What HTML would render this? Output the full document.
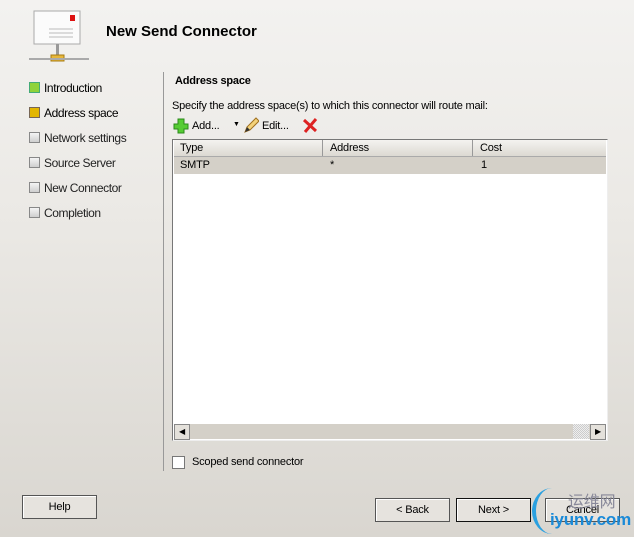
<!DOCTYPE html><html><head><style>
body{margin:0;width:634px;height:537px;overflow:hidden;font-family:"Liberation Sans",sans-serif;font-size:11px;letter-spacing:-0.2px;color:#000;background:linear-gradient(#f3f2f0,#ebe9e5 40%,#d9d6d0);position:relative}
.a{position:absolute;white-space:nowrap}
.nav{left:44px}
.sq{position:absolute;left:29px;width:9px;height:9px;border:1px solid #888;background:linear-gradient(#f4f4f4,#cfcfcf)}
.btn{position:absolute;height:22px;border:1px solid #555;box-shadow:inset 1px 1px #fff;background:#e6e3de;text-align:center;line-height:22px}
</style></head><body>
<svg class="a" style="left:27px;top:8px" width="64" height="56"><rect x="7" y="3" width="46" height="33" fill="#fbfbfb" stroke="#aaa"/><rect x="43" y="7" width="5" height="6" fill="#d11"/><g stroke="#bbb"><line x1="22" y1="21" x2="46" y2="21"/><line x1="22" y1="25" x2="46" y2="25"/><line x1="22" y1="29" x2="46" y2="29"/></g><rect x="29" y="36" width="3" height="12" fill="#999"/><rect x="24" y="47" width="13" height="6" fill="#e7b73a" stroke="#a77b10"/><line x1="2" y1="51" x2="62" y2="51" stroke="#aaa" stroke-width="2"/></svg>
<div class="a" style="left:106px;top:23px;font-weight:bold;font-size:15px;letter-spacing:0">New Send Connector</div>
<div class="sq" style="top:82px;background:#8fd33a;border-color:#4a7"></div>
<div class="sq" style="top:107px;background:#e3b600;border-color:#765"></div>
<div class="sq" style="top:132px"></div><div class="sq" style="top:157px"></div><div class="sq" style="top:182px"></div><div class="sq" style="top:207px"></div>
<div class="a nav" style="top:81px;font-size:12px;letter-spacing:-0.4px">Introduction</div>
<div class="a nav" style="top:106px;font-size:12px;letter-spacing:-0.4px">Address space</div>
<div class="a nav" style="top:131px;color:#222;font-size:12px;letter-spacing:-0.4px">Network settings</div>
<div class="a nav" style="top:156px;color:#222;font-size:12px;letter-spacing:-0.4px">Source Server</div>
<div class="a nav" style="top:181px;color:#222;font-size:12px;letter-spacing:-0.4px">New Connector</div>
<div class="a nav" style="top:206px;color:#222;font-size:12px;letter-spacing:-0.4px">Completion</div>
<div class="a" style="left:163px;top:72px;width:1px;height:399px;background:#999"></div>
<div class="a" style="left:175px;top:75px;font-weight:bold">Address space</div>
<div class="a" style="left:172px;top:100px">Specify the address space(s) to which this connector will route mail:</div>
<svg class="a" style="left:173px;top:118px" width="16" height="16"><path d="M5 1h6v5h4v5h-4v4H5v-4H1V6h4z" fill="#5c3" stroke="#2a8a1a"/></svg>
<div class="a" style="left:192px;top:120px">Add...</div>
<div class="a" style="left:233px;top:121px;font-size:7px">▼</div>
<svg class="a" style="left:243px;top:117px" width="16" height="17"><path d="M2 15l2-5 9-9 3 3-9 9z" fill="#f3d27a" stroke="#a07020"/><path d="M2 15l2-5 3 3z" fill="#333"/></svg>
<div class="a" style="left:262px;top:120px">Edit...</div>
<svg class="a" style="left:302px;top:118px" width="16" height="15"><path d="M2 2l12 11M14 1L3 14" stroke="#d22" stroke-width="3"/></svg>
<div class="a" style="left:172px;top:139px;width:434px;height:300px;background:#fff;border:1px solid #777;border-right-color:#eee;border-bottom-color:#eee"></div>
<div class="a" style="left:174px;top:140px;width:432px;height:16px;background:linear-gradient(#f4f3f0,#dcd9d2);border-bottom:1px solid #aaa"></div>
<div class="a" style="left:322px;top:140px;width:1px;height:16px;background:#999"></div>
<div class="a" style="left:472px;top:140px;width:1px;height:16px;background:#999"></div>
<div class="a" style="left:180px;top:142px">Type</div><div class="a" style="left:330px;top:142px">Address</div><div class="a" style="left:480px;top:142px">Cost</div>
<div class="a" style="left:174px;top:157px;width:432px;height:17px;background:#d4d0c8"></div>
<div class="a" style="left:180px;top:159px">SMTP</div><div class="a" style="left:330px;top:159px">*</div><div class="a" style="left:481px;top:159px">1</div>
<div class="a" style="left:174px;top:424px;width:432px;height:15px;background:#d4d0c8"></div>
<div class="a" style="left:174px;top:424px;width:14px;height:14px;border:1px solid #888;background:#e4e1db;font-size:8px;text-align:center;line-height:14px">◀</div>
<div class="a" style="left:573px;top:424px;width:16px;height:15px;background:repeating-conic-gradient(#ccc 0 25%,#eee 0 50%) 0 0/2px 2px"></div>
<div class="a" style="left:590px;top:424px;width:14px;height:14px;border:1px solid #888;background:#e4e1db;font-size:8px;text-align:center;line-height:14px">▶</div>
<div class="a" style="left:172px;top:456px;width:11px;height:11px;border:1px solid #777;background:#fff"></div>
<div class="a" style="left:192px;top:456px">Scoped send connector</div>
<div class="btn" style="left:22px;top:495px;width:73px">Help</div>
<div class="btn" style="left:375px;top:498px;width:73px">&lt; Back</div>
<div class="btn" style="left:456px;top:498px;width:73px;border-color:#111">Next &gt;</div>
<div class="btn" style="left:545px;top:498px;width:73px">Cancel</div>
<div class="a" style="left:532px;top:488px;width:36px;height:46px;border-left:4px solid #2aa0e0;border-radius:50%"></div>
<div class="a" style="left:568px;top:488px;color:#889;font-size:16px;font-family:'Noto Sans CJK SC',sans-serif">运维网</div>
<div class="a" style="left:550px;top:510px;color:#1a8ad8;font-size:17px;font-weight:bold">iyunv.com</div>
</body></html>
